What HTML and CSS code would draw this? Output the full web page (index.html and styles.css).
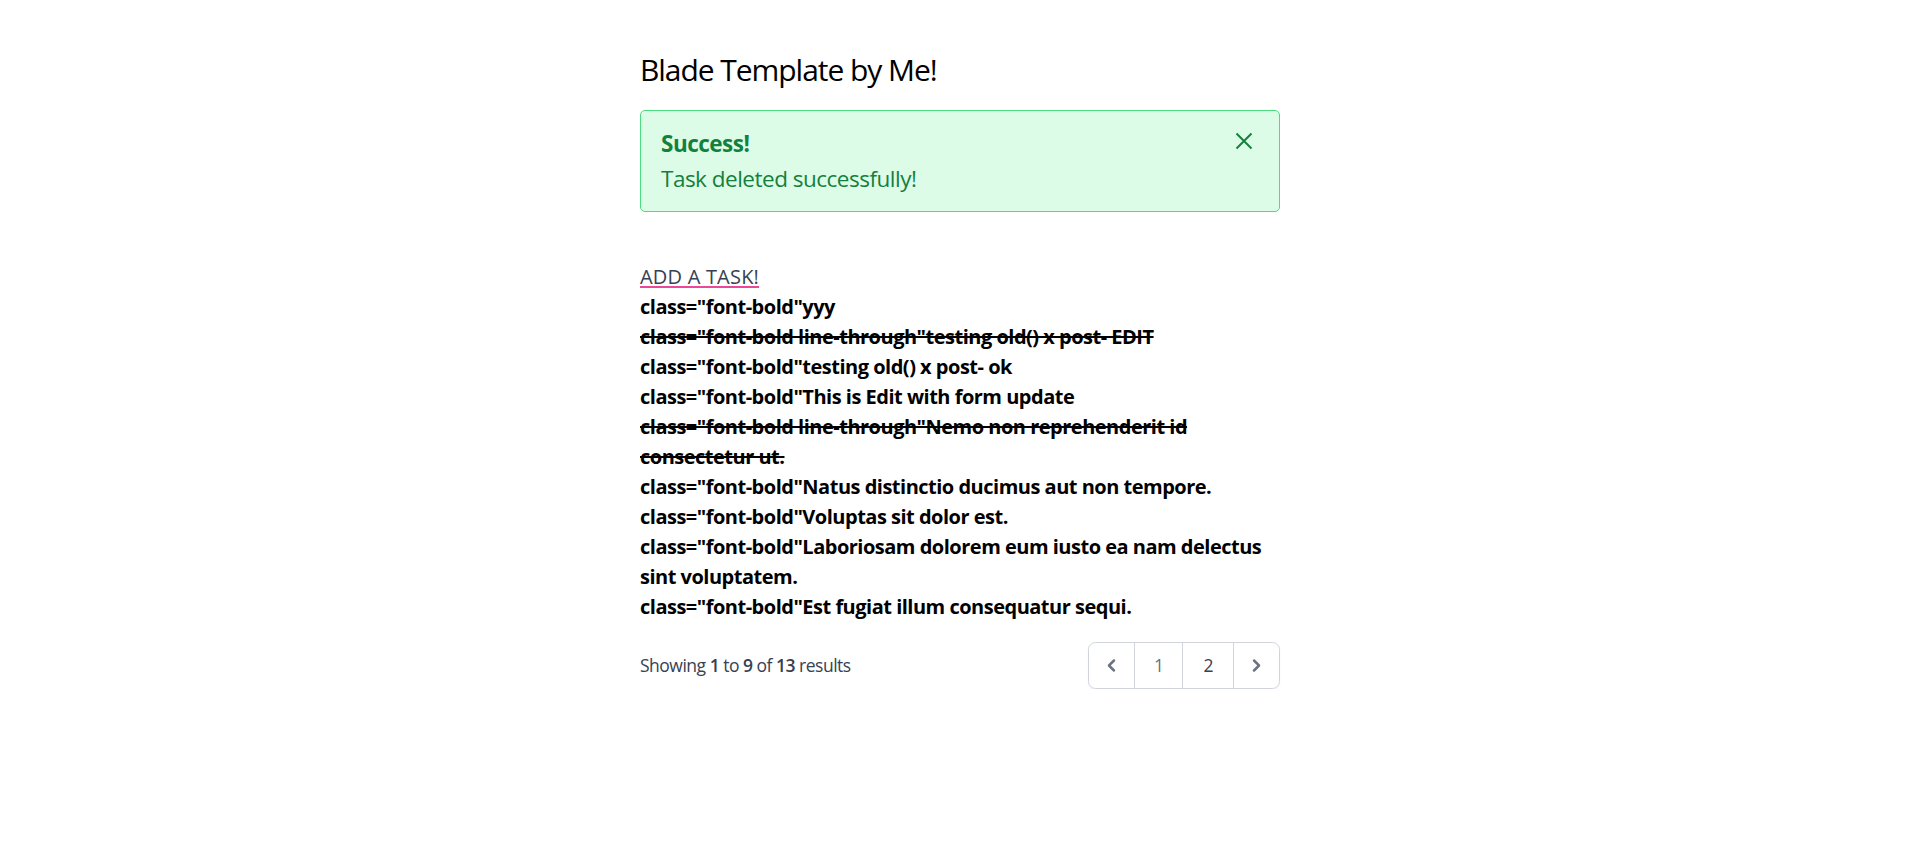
FILE: index.html
```html
<!DOCTYPE html>
<html lang="en">
<head>
<meta charset="utf-8">
<title>Blade Template</title>
<link rel="stylesheet" href="styles.css">
</head>
<body>
<main class="container">
  <h1 class="title">Blade Template by Me!</h1>
  <div class="alert" role="alert">
    <strong class="alert-title">Success!</strong>
    <div class="alert-msg">Task deleted successfully!</div>
    <button class="alert-close" type="button" aria-label="Close">
      <svg viewBox="0 0 24 24" fill="none" stroke="currentColor" stroke-width="1.6"><path d="M6 18L18 6M6 6l12 12"/></svg>
    </button>
  </div>
  <section class="tasks">
    <div><a class="add-link" href="#">ADD A TASK!</a></div>
    <ul class="task-list">
      <li class="task">class="font-bold"yyy</li>
      <li class="task done">class="font-bold line-through"testing old() x post- EDIT</li>
      <li class="task">class="font-bold"testing old() x post- ok</li>
      <li class="task">class="font-bold"This is Edit with form update</li>
      <li class="task done">class="font-bold line-through"Nemo non reprehenderit id consectetur ut.</li>
      <li class="task">class="font-bold"Natus distinctio ducimus aut non tempore.</li>
      <li class="task">class="font-bold"Voluptas sit dolor est.</li>
      <li class="task">class="font-bold"Laboriosam dolorem eum iusto ea nam delectus sint voluptatem.</li>
      <li class="task">class="font-bold"Est fugiat illum consequatur sequi.</li>
    </ul>
  </section>
  <nav class="pager" aria-label="Pagination Navigation">
    <p class="pager-info">Showing <span class="num">1</span> to <span class="num">9</span> of <span class="num">13</span> results</p>
    <span class="pager-links">
      <span class="pg pg-arrow pg-first" aria-disabled="true">
        <svg viewBox="0 0 20 20" fill="currentColor"><path fill-rule="evenodd" d="M12.707 5.293a1 1 0 010 1.414L9.414 10l3.293 3.293a1 1 0 01-1.414 1.414l-4-4a1 1 0 010-1.414l4-4a1 1 0 011.414 0z" clip-rule="evenodd"/></svg>
      </span>
      <span class="pg pg-num pg-current" aria-current="page">1</span>
      <a class="pg pg-num pg-link" href="#">2</a>
      <a class="pg pg-arrow pg-last" href="#" aria-label="Next">
        <svg viewBox="0 0 20 20" fill="currentColor"><path fill-rule="evenodd" d="M7.293 14.707a1 1 0 010-1.414L10.586 10 7.293 6.707a1 1 0 011.414-1.414l4 4a1 1 0 010 1.414l-4 4a1 1 0 01-1.414 0z" clip-rule="evenodd"/></svg>
      </a>
    </span>
  </nav>
</main>
</body>
</html>
```
FILE: styles.css
```css
* { box-sizing: border-box; }
html, body { margin: 0; padding: 0; background: #fff; }
body {
  font-family: "Open Sans", "Noto Sans", sans-serif;
  font-size: 20px;
  line-height: 30px;
  letter-spacing: -0.025em;
  color: #000;
}
.container {
  width: 640px;
  margin: 0 auto;
  padding-top: 47px;
}
.title {
  margin: 0;
  font-size: 30px;
  line-height: 45px;
  font-weight: 400;
  letter-spacing: -0.035em;
}
.alert {
  position: relative;
  margin-top: 18px;
  padding: 15px 20px;
  border: 1px solid #4ade80;
  border-radius: 5px;
  background: #dcfce7;
  color: #15803d;
  font-size: 22.5px;
  line-height: 35px;
}
.alert-title { display: block; font-weight: 700; }
.alert-msg { display: block; }
.alert-close {
  position: absolute;
  top: 0;
  right: 0;
  padding: 15px 20px;
  border: 0;
  background: none;
  color: #15803d;
  line-height: 0;
  cursor: pointer;
}
.alert-close svg { width: 30px; height: 30px; display: block; }
.tasks { margin-top: 50px; }
.add-link {
  color: #374151;
  font-weight: 500;
  letter-spacing: 0.01em;
  text-decoration: underline;
  text-decoration-color: #ec4899;
  text-decoration-thickness: 2px;
  text-underline-offset: 2px;
}
.task-list {
  list-style: none;
  margin: 0;
  padding: 0;
}
.task { font-weight: 700; }
.task.done { text-decoration: line-through; }
.pager {
  margin-top: 20px;
  display: flex;
  align-items: center;
  justify-content: space-between;
}
.pager-info {
  margin: 0;
  font-size: 17.5px;
  line-height: 25px;
  color: #374151;
}
.num { font-weight: 600; }
.pager-links {
  display: inline-flex;
  border-radius: 7.5px;
  box-shadow: 0 1px 2px rgba(0,0,0,0.05);
}
.pg {
  display: inline-flex;
  align-items: center;
  font-size: 17.5px;
  line-height: 25px;
  font-weight: 500;
  background: #fff;
  border: 1px solid #d1d5db;
  color: #6b7280;
  text-decoration: none;
}
.pg + .pg { margin-left: -1px; }
.pg-arrow { padding: 10px; }
.pg-arrow svg { width: 25px; height: 25px; display: block; }
.pg-num { padding: 10px 20px; }
.pg-current { padding: 10px 19px; }
.pg-link { color: #374151; }
.pg-first { border-radius: 7.5px 0 0 7.5px; }
.pg-last { border-radius: 0 7.5px 7.5px 0; }
```
